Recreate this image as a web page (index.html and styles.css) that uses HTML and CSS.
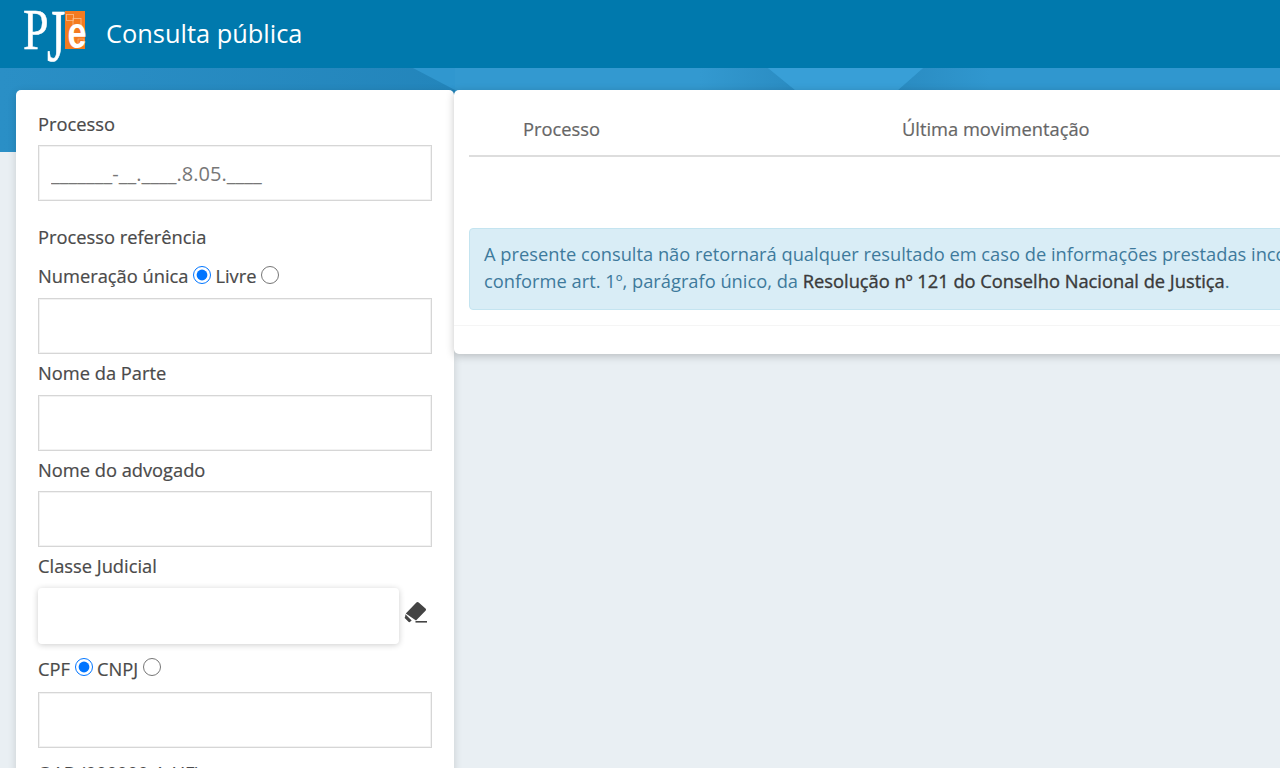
FILE: index.html
```html
<!DOCTYPE html>
<html lang="pt-BR">
<head>
<meta charset="utf-8">
<title>Consulta pública</title>
<link rel="stylesheet" href="styles.css">
</head>
<body>
<header class="topbar">
  <div class="logo">
    <span class="logo-p">P</span>
    <span class="logo-j">J</span>
    <span class="logo-e">
      <svg class="logo-squares" width="20" height="38" viewBox="0 0 20 38" aria-hidden="true">
        <rect x="1.5" y="3.5" width="7" height="6" fill="none" stroke="#fbbd8c" stroke-width=".8"/>
        <rect x="8" y="7.5" width="8" height="8" fill="none" stroke="#fbbd8c" stroke-width=".8"/>
        <rect x="13" y="28" width="6" height="6" fill="none" stroke="#fbbd8c" stroke-width=".6"/>
      </svg>
      <span class="logo-e-glyph">e</span>
    </span>
  </div>
  <h1 class="title">Consulta pública</h1>
</header>
<div class="band">
  <svg class="band-art" width="1280" height="84" viewBox="0 0 1280 84" aria-hidden="true">
    <defs>
      <linearGradient id="fadeL" x1="0" x2="1" y1="0" y2="0">
        <stop offset="0" stop-color="#2a8fc6"/><stop offset="1" stop-color="#2385bb"/>
      </linearGradient>
      <linearGradient id="fadeM" x1="0" x2="1" y1="0" y2="0">
        <stop offset="0" stop-color="#3399d0"/><stop offset="1" stop-color="#2a8cc2"/>
      </linearGradient>
      <linearGradient id="fadeR" x1="0" x2="1" y1="0" y2="0">
        <stop offset="0" stop-color="#2a8cc2"/><stop offset="1" stop-color="#3097cf"/>
      </linearGradient>
    </defs>
    <rect width="1280" height="84" fill="#3097cf"/>
    <rect x="455" width="245" height="22" fill="#3399d0"/>
    <polygon points="0,0 413,0 455,22 455,84 0,84" fill="url(#fadeL)"/>
    <polygon points="700,0 768,0 795,22 700,22" fill="url(#fadeM)"/>
    <polygon points="898,22 923,0 990,0 990,22" fill="url(#fadeR)"/>
    <polygon points="795,22 768,0 923,0 898,22" fill="#389fd7"/>
  </svg>
</div>
<main class="content">
  <form class="filters">
    <label class="label label-first">Processo</label>
    <input class="field field-mask" type="text" value="_______-__.____.8.05.____">
    <label class="label label-ref">Processo referência</label>
    <div class="radios">
      <span>Numeração única</span><input class="radio" type="radio" name="ref" checked>
      <span>Livre</span><input class="radio" type="radio" name="ref">
    </div>
    <input class="field" type="text">
    <label class="label">Nome da Parte</label>
    <input class="field" type="text">
    <label class="label">Nome do advogado</label>
    <input class="field" type="text">
    <label class="label">Classe Judicial</label>
    <div class="classe-row">
      <input class="field field-raised" type="text">
      <svg class="eraser" width="24" height="24" viewBox="0 0 24 24" aria-hidden="true">
        <path d="M1.8 14.6 12.4 3.4c.7-.7 1.6-.7 2.3 0l6.8 6c.7.7.7 1.6 0 2.3L12 21.4z" fill="#444"/>
        <path d="M1.4 15.2 7.7 21.4 6.4 22.6c-.7.7-1.5.7-2.2 0L1.2 19.6c-.6-.7-.6-1.5 0-2.2z" fill="#444"/>
        <path d="M11.5 22.8H23" stroke="#444" stroke-width="1.6" fill="none"/>
      </svg>
    </div>
    <div class="radios radios-doc">
      <span>CPF</span><input class="radio" type="radio" name="doc" checked>
      <span>CNPJ</span><input class="radio" type="radio" name="doc">
    </div>
    <input class="field" type="text">
    <label class="label label-oab">OAB (000000-A-UF)</label>
  </form>
  <section class="results">
    <div class="results-head">
      <span class="col-proc">Processo</span>
      <span class="col-mov">Última movimentação</span>
    </div>
    <div class="results-body">
      <div class="notice">
        <p>A presente consulta não retornará qualquer resultado em caso de informações prestadas incompletas ou divergentes,</p>
        <p>conforme art. 1º, parágrafo único, da <strong>Resolução nº 121 do Conselho Nacional de Justiça</strong>.</p>
      </div>
    </div>
  </section>
</main>
</body>
</html>
```
FILE: styles.css
```css
* { box-sizing: border-box; }
html, body { margin: 0; height: 768px; overflow: hidden; }
body {
  width: 1280px;
  background: #e9eff3;
  font-family: "Open Sans", "Noto Sans", sans-serif;
  color: #4a4a4a;
  font-size: 18.3px;
}
.topbar {
  height: 68px;
  background: #0079ad;
  display: flex;
  align-items: flex-start;
  padding-left: 23px;
}
.logo { display: flex; align-items: flex-start; width: 62px; height: 50px; margin-top: 11px; }
.logo-p, .logo-j {
  font-family: "Liberation Serif", serif;
  font-size: 56px;
  line-height: 38px;
  color: #fff;
  flex: none;
  transform-origin: 0 0;
  -webkit-text-stroke: .5px #fff;
}
.logo-p { width: 24px; transform: scaleX(.82); }
.logo-j { width: 18px; transform: scale(.84, 1.32); }
.logo-e {
  position: relative;
  flex: none;
  width: 20px;
  height: 38px;
  background: #f47b20;
}
.logo-e-glyph {
  display: block;
  position: relative;
  color: #fff;
  font-family: "Liberation Sans", sans-serif;
  font-weight: 700;
  font-size: 45px;
  line-height: 43px;
  text-align: center;
  transform: scaleX(.76);
}
.logo-squares { position: absolute; left: 0; top: 0; }
.title {
  margin: 13px 0 0 21px;
  font-size: 25.4px;
  line-height: 40px;
  font-weight: 400;
  color: #fff;
}
.band { height: 84px; }
.band-art { display: block; }
.content {
  display: flex;
  align-items: flex-start;
  margin: -62px 0 0 16px;
  position: relative;
}
.filters {
  flex: none;
  width: 438px;
  height: 700px;
  background: #fff;
  border-radius: 5px 5px 0 0;
  box-shadow: 0 2px 8px rgba(0, 0, 0, .14);
  padding: 21px 22px 0;
  display: flex;
  flex-direction: column;
}
.filters > * { flex: none; }
.label {
  font-weight: 500;
  line-height: 26px;
  margin: 6px 0 8.5px;
  color: #4a4a4a;
  -webkit-text-stroke: .2px #4a4a4a;
}
.label-first { margin: 0 0 8px; }
.label-ref { margin: 23px 0 0; }
.label-oab { margin-top: 12px; }
.radios {
  display: flex;
  align-items: flex-start;
  height: 35px;
  margin-top: 13px;
  line-height: 26px;
  font-weight: 500;
  -webkit-text-stroke: .2px #4a4a4a;
}
.radios-doc { margin-top: 12px; height: 36px; }
.radio {
  appearance: auto;
  width: 18px;
  height: 18px;
  margin: 3px 4px 0 5px;
  accent-color: #0075ff;
  flex: none;
}
.radios-doc .radio { margin-top: 2px; }
.field {
  display: block;
  width: 394px;
  height: 56px;
  border: 1px solid #d6d6d6;
  box-shadow: inset 0 0 0 1px #f2f2f2;
  background: #fff;
  padding: 0 12px;
  font-family: inherit;
  font-size: 20px;
  color: #777;
  outline: none;
  border-radius: 0;
}
.classe-row { display: flex; align-items: flex-start; }
.field-raised {
  flex: none;
  width: 361px;
  height: 56.5px;
  border: 0;
  border-radius: 4px;
  box-shadow: 0 1px 6px rgba(0, 0, 0, .2);
}
.eraser { margin: 11px 0 0 5px; flex: none; }
.results {
  flex: none;
  width: 1000px;
  height: 264px;
  background: #fff;
  border-radius: 5px 0 0 5px;
  box-shadow: 0 2px 8px rgba(0, 0, 0, .22);
  padding: 0 0 0 15px;
  overflow: hidden;
}
.results-head {
  height: 67px;
  border-bottom: 2px solid #ddd;
  display: flex;
  align-items: center;
  color: #666;
  font-weight: 500;
  padding-top: 12px;
  padding-left: 54px;
  -webkit-text-stroke: .2px #666;
}
.col-proc { width: 379px; }
.results-body { height: 169px; border-bottom: 1px solid #f5f5f5; margin-left: -15px; padding: 71px 0 0 15px; }
.notice {
  width: 1100px;
  height: 82px;
  background: #d9edf6;
  border: 1px solid #c4e4f0;
  border-radius: 4px;
  padding: 11px 14px;
  color: #3e7a9c;
  line-height: 27px;
  white-space: nowrap;
}
.notice p { margin: 0; }
.notice strong { font-weight: 500; color: #3a3a3a; -webkit-text-stroke: .35px #3a3a3a; }
```
